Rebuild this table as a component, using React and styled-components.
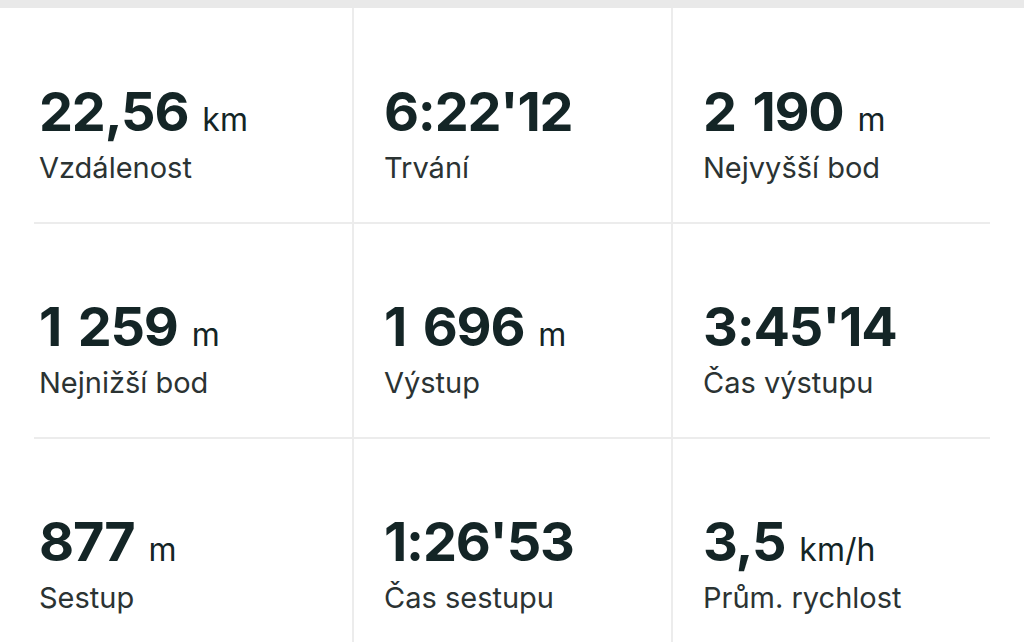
import React from 'react'
import styled, { createGlobalStyle } from 'styled-components'

const stats = [
  { value: '22,56', unit: 'km', label: 'Vzdálenost' },
  { value: "6:22'12", label: 'Trvání' },
  { value: '2 190', unit: 'm', label: 'Nejvyšší bod' },
  { value: '1 259', unit: 'm', label: 'Nejnižší bod' },
  { value: '1 696', unit: 'm', label: 'Výstup' },
  { value: "3:45'14", label: 'Čas výstupu' },
  { value: '877', unit: 'm', label: 'Sestup' },
  { value: "1:26'53", label: 'Čas sestupu' },
  { value: '3,5', unit: 'km/h', label: 'Prům. rychlost' },
]

const GlobalStyle = createGlobalStyle`
  html, body { margin: 0; padding: 0; background: #fff; }
  body { font-family: Inter, "Open Sans", sans-serif; overflow: hidden; }
`

const Page = styled.div`
  width: 1024px;
  height: 642px;
  overflow: hidden;
  background: #fff;
`

const TopBar = styled.div`
  height: 8px;
  background: #e9e9e9;
`

const Grid = styled.div`
  display: grid;
  grid-template-columns: 318px 319px 319px;
  margin-left: 34px;
`

const Cell = styled.div`
  position: relative;
  height: 215px;
  box-sizing: border-box;
  padding: 77px 0 0 ${p => (p.$col === 0 ? 5 : 30)}px;
  border-left: ${p => (p.$col === 0 ? 'none' : '2px solid #ececec')};
  /* divider lines: horizontal ones stop at the grid edges, vertical run through */
  &::after {
    content: '';
    display: ${p => (p.$last ? 'none' : 'block')};
    position: absolute;
    left: ${p => (p.$col === 0 ? 0 : -2)}px;
    right: 0;
    bottom: -1px;
    height: 2px;
    background: #ececec;
  }
`

const Value = styled.div`
  display: flex;
  align-items: baseline;
  gap: 14px;
  color: #142526;
  line-height: 1;
`

const Number = styled.span`
  font-size: 54px;
  font-weight: 700;
  letter-spacing: -1.2px;
  word-spacing: 5px;
  white-space: pre;
`

const Unit = styled.span`
  font-size: 32px;
  font-weight: 400;
`

const Label = styled.div`
  margin-top: 14px;
  font-size: 29px;
  color: #2b3333;
  line-height: 1;
`

export default function App() {
  return (
    <Page>
      <GlobalStyle />
      <TopBar />
      <Grid>
        {stats.map((s, i) => (
          <Cell key={i} $col={i % 3} $last={i >= 6}>
            <Value>
              <Number>{s.value}</Number>
              {s.unit && <Unit>{s.unit}</Unit>}
            </Value>
            <Label>{s.label}</Label>
          </Cell>
        ))}
      </Grid>
    </Page>
  )
}
